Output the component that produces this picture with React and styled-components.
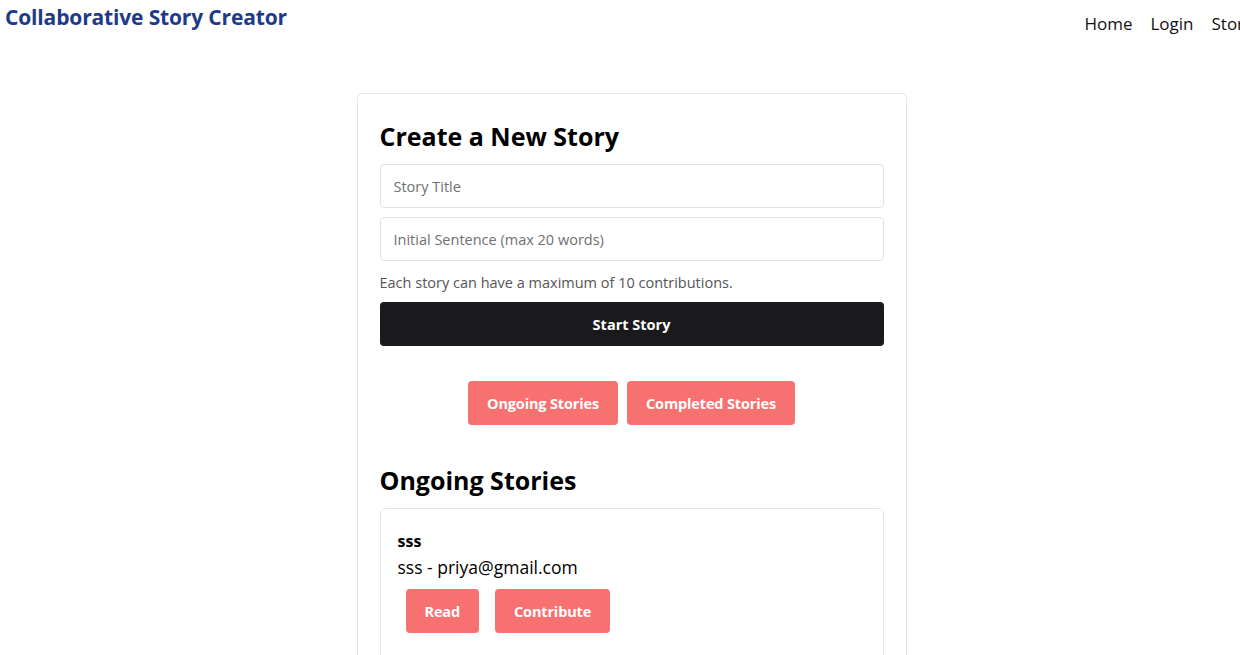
import React, { useState } from "react";
import styled, { createGlobalStyle } from "styled-components";

const GlobalStyle = createGlobalStyle`
  body {
    margin: 0;
    background: #ffffff;
    font-family: "Segoe UI", "Open Sans", "Noto Sans", sans-serif;
    color: #000000;
    overflow: hidden;
  }
`;

const Page = styled.div`
  width: 1263px;
  height: 655px;
  overflow: hidden;
`;

const Header = styled.header`
  display: flex;
  justify-content: space-between;
  align-items: flex-start;
  padding-left: 5px;
  height: 48px;
`;

const Brand = styled.h1`
  margin: 3px 0 0;
  font-size: 21px;
  font-weight: 700;
  color: #1e3a8a;
  letter-spacing: -0.15px;
`;

const Nav = styled.nav`
  display: flex;
  gap: 18px;
  margin-top: 12px;
  margin-right: -3px;
  white-space: nowrap;
`;

const NavLink = styled.a`
  font-size: 17px;
  color: #111111;
  text-decoration: none;
`;

const Main = styled.main`
  display: flex;
  justify-content: center;
  padding-top: 45px;
`;

const Card = styled.section`
  width: 550px;
  box-sizing: border-box;
  border: 1px solid #e5e5e5;
  border-radius: 6px;
  padding: 22px;
  min-height: 700px;
`;

const Heading = styled.h2`
  margin: 3px 0 11px;
  font-size: 25px;
  font-weight: 700;
`;

const Input = styled.input`
  display: block;
  width: 100%;
  box-sizing: border-box;
  height: 44px;
  margin-bottom: 9px;
  padding: 0 13px;
  border: 1px solid #e2e2e2;
  border-radius: 4px;
  font-family: inherit;
  font-size: 14.5px;
  outline: none;

  &::placeholder {
    color: #707070;
  }
`;

const Hint = styled.p`
  margin: 12px 0 10px;
  font-size: 14.5px;
  color: #555555;
`;

const PrimaryButton = styled.button`
  width: 100%;
  height: 44px;
  border: none;
  border-radius: 4px;
  background: #1a1a1c;
  color: #ffffff;
  font-family: inherit;
  font-size: 14.5px;
  font-weight: 700;
`;

const Tabs = styled.div`
  display: flex;
  justify-content: center;
  gap: 9px;
  margin-top: 35px;
`;

const PinkButton = styled.button`
  height: 44px;
  padding: 0 19px;
  border: none;
  border-radius: 4px;
  background: #f87171;
  color: #ffffff;
  font-family: inherit;
  font-size: 14.5px;
  font-weight: 700;
  letter-spacing: -0.15px;
  margin: ${(p) => p.$margin || 0};
`;

const SectionTitle = styled.h2`
  margin: 38px 0 11px;
  font-size: 25px;
  font-weight: 700;
`;

const StoryCard = styled.div`
  border: 1px solid #e5e5e5;
  border-radius: 6px;
  padding: 21px 17px;
`;

const StoryTitle = styled.div`
  font-size: 16px;
  font-weight: 700;
`;

const StoryLine = styled.div`
  font-size: 17.5px;
  margin-top: 3px;
`;

const Actions = styled.div`
  display: flex;
`;

export default function App() {
  const [tab, setTab] = useState("ongoing");

  return (
    <Page>
      <GlobalStyle />
      <Header>
        <Brand>Collaborative Story Creator</Brand>
        <Nav>
          <NavLink href="#">Home</NavLink>
          <NavLink href="#">Login</NavLink>
          <NavLink href="#">Stories</NavLink>
        </Nav>
      </Header>
      <Main>
        <Card>
          <Heading>Create a New Story</Heading>
          <Input placeholder="Story Title" />
          <Input placeholder="Initial Sentence (max 20 words)" />
          <Hint>Each story can have a maximum of 10 contributions.</Hint>
          <PrimaryButton>Start Story</PrimaryButton>
          <Tabs>
            <PinkButton onClick={() => setTab("ongoing")}>Ongoing Stories</PinkButton>
            <PinkButton onClick={() => setTab("completed")}>Completed Stories</PinkButton>
          </Tabs>
          <SectionTitle>{tab === "ongoing" ? "Ongoing Stories" : "Completed Stories"}</SectionTitle>
          <StoryCard>
            <StoryTitle>sss</StoryTitle>
            <StoryLine>sss - priya@gmail.com</StoryLine>
            <Actions>
              <PinkButton $margin="10px 8px 8px">Read</PinkButton>
              <PinkButton $margin="10px 8px 8px">Contribute</PinkButton>
            </Actions>
          </StoryCard>
        </Card>
      </Main>
    </Page>
  );
}
